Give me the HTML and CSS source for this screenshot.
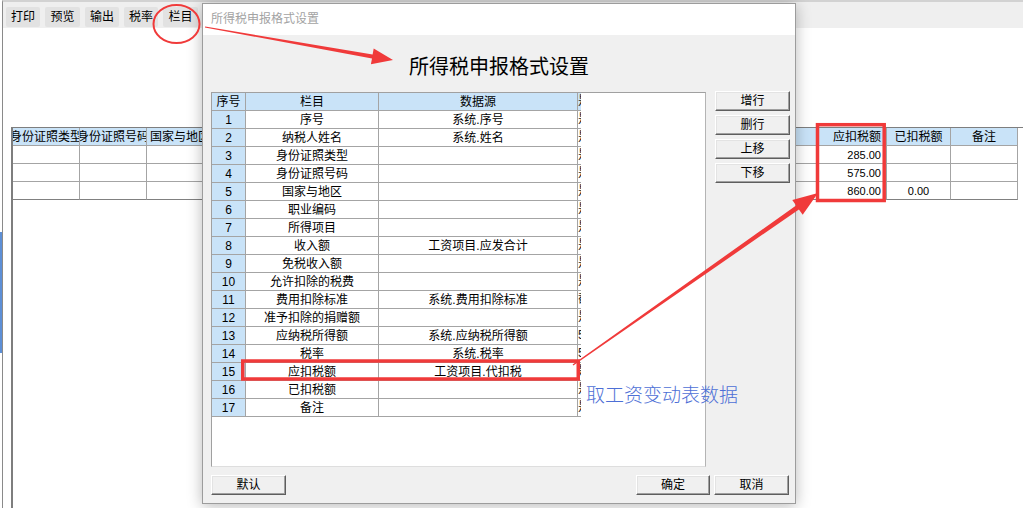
FILE: index.html
```html
<!DOCTYPE html>
<html lang="zh-CN">
<head>
<meta charset="utf-8">
<title>所得税申报格式设置</title>
<link rel="stylesheet" href="styles.css">
</head>
<body>
<div class="screen">
  <div class="edge"><div class="edge-blue"></div></div>
  <div class="app">
    <div class="toolbar">
      <span class="tbtn">打印</span>
      <span class="tbtn">预览</span>
      <span class="tbtn">输出</span>
      <span class="tbtn">税率</span>
      <span class="tbtn">栏目</span>
    </div>
    <div class="bg-grid">
      <div class="bh">身份证照类型</div>
      <div class="bh">身份证照号码</div>
      <div class="bh">国家与地区</div>
      <div class="bh">职业编码</div>
      <div class="bh">所得项目</div>
      <div class="bh">收入额</div>
      <div class="bh">免税收入额</div>
      <div class="bh">允许扣除的税费</div>
      <div class="bh">费用扣除标准</div>
      <div class="bh">准予扣除的捐赠额</div>
      <div class="bh">应纳税所得额</div>
      <div class="bh">税率</div>
      <div class="bh right">应扣税额</div>
      <div class="bh">已扣税额</div>
      <div class="bh">备注</div>

      <div class="bc"></div><div class="bc"></div><div class="bc"></div><div class="bc"></div><div class="bc"></div><div class="bc"></div><div class="bc"></div><div class="bc"></div><div class="bc"></div><div class="bc"></div><div class="bc"></div><div class="bc"></div>
      <div class="bc right num">285.00</div><div class="bc"></div><div class="bc"></div>

      <div class="bc"></div><div class="bc"></div><div class="bc"></div><div class="bc"></div><div class="bc"></div><div class="bc"></div><div class="bc"></div><div class="bc"></div><div class="bc"></div><div class="bc"></div><div class="bc"></div><div class="bc"></div>
      <div class="bc right num">575.00</div><div class="bc"></div><div class="bc"></div>

      <div class="bc last"></div><div class="bc last"></div><div class="bc last"></div><div class="bc last"></div><div class="bc last"></div><div class="bc last"></div><div class="bc last"></div><div class="bc last"></div><div class="bc last"></div><div class="bc last"></div><div class="bc last"></div><div class="bc last"></div>
      <div class="bc last right num">860.00</div><div class="bc last num">0.00</div><div class="bc last"></div>
    </div>
  </div>
</div>

<div class="dialog">
  <div class="titlebar">所得税申报格式设置</div>
  <div class="dbody">
    <div class="heading">所得税申报格式设置</div>
    <div class="main">
      <div class="listbox">
        <div class="grid">
          <div class="gh">序号</div><div class="gh">栏目</div><div class="gh">数据源</div><div class="gx gxh">是</div>

          <div class="gn">1</div><div class="gc">序号</div><div class="gc">系统.序号</div><div class="gx">是</div>
          <div class="gn">2</div><div class="gc">纳税人姓名</div><div class="gc">系统.姓名</div><div class="gx">是</div>
          <div class="gn">3</div><div class="gc">身份证照类型</div><div class="gc"></div><div class="gx">是</div>
          <div class="gn">4</div><div class="gc">身份证照号码</div><div class="gc"></div><div class="gx">是</div>
          <div class="gn">5</div><div class="gc">国家与地区</div><div class="gc"></div><div class="gx">是</div>
          <div class="gn">6</div><div class="gc">职业编码</div><div class="gc"></div><div class="gx">是</div>
          <div class="gn">7</div><div class="gc">所得项目</div><div class="gc"></div><div class="gx">是</div>
          <div class="gn">8</div><div class="gc">收入额</div><div class="gc">工资项目.应发合计</div><div class="gx">是</div>
          <div class="gn">9</div><div class="gc">免税收入额</div><div class="gc"></div><div class="gx">是</div>
          <div class="gn">10</div><div class="gc">允许扣除的税费</div><div class="gc"></div><div class="gx">是</div>
          <div class="gn">11</div><div class="gc">费用扣除标准</div><div class="gc">系统.费用扣除标准</div><div class="gx">截</div>
          <div class="gn">12</div><div class="gc">准予扣除的捐赠额</div><div class="gc"></div><div class="gx">是</div>
          <div class="gn">13</div><div class="gc">应纳税所得额</div><div class="gc">系统.应纳税所得额</div><div class="gx">5</div>
          <div class="gn">14</div><div class="gc">税率</div><div class="gc">系统.税率</div><div class="gx">5</div>
          <div class="gn">15</div><div class="gc">应扣税额</div><div class="gc">工资项目.代扣税</div><div class="gx">是</div>
          <div class="gn">16</div><div class="gc">已扣税额</div><div class="gc"></div><div class="gx">是</div>
          <div class="gn">17</div><div class="gc">备注</div><div class="gc"></div><div class="gx">是</div>
        </div>
      </div>
      <div class="sidebtns">
        <button class="btn">增行</button>
        <button class="btn">删行</button>
        <button class="btn">上移</button>
        <button class="btn">下移</button>
      </div>
    </div>
    <div class="footer">
      <button class="btn">默认</button>
      <button class="btn ok">确定</button>
      <button class="btn">取消</button>
    </div>
  </div>
</div>

<svg class="marks" width="1023" height="508" viewBox="0 0 1023 508">
  <ellipse cx="176.5" cy="24" rx="23" ry="19" fill="none" stroke="#f03a3a" stroke-width="2"/>
  <polygon points="205.1,26.5 372.6,54.4 373.7,48.5 393,60 370.9,64.3 372.0,58.4 204.9,27.5" fill="#f03a3a"/>
  <rect x="242.75" y="361" width="335.5" height="18" fill="none" stroke="#f03a3a" stroke-width="3.5"/>
  <rect x="817.5" y="124.7" width="66.7" height="75.8" fill="none" stroke="#f03a3a" stroke-width="3.5"/>
  <polygon points="572.6,364.4 796.1,205.4 792.3,200.0 818,193 802.7,214.8 798.9,209.4 573.4,365.6" fill="#f03a3a"/>
</svg>
<div class="note">取工资变动表数据</div>
</body>
</html>
```

FILE: styles.css
```css
* { box-sizing: border-box; }
html, body {
  margin: 0;
  padding: 0;
  width: 1023px;
  height: 508px;
  overflow: hidden;
  background: #ffffff;
  font-family: "Liberation Sans", "Noto Sans CJK SC", sans-serif;
  font-size: 12px;
  color: #000;
}
.screen {
  display: flex;
  width: 1023px;
  height: 508px;
}
.edge {
  width: 2px;
  flex: none;
  background: #ffffff;
}
.edge-blue {
  margin-top: 232px;
  height: 121px;
  background: #5d8fd6;
}
.app {
  flex: 1;
  border-left: 1px solid #8a8a8a;
  border-top: 2px solid #d2d2d2;
  background: #fff;
  display: flex;
  flex-direction: column;
}
.toolbar {
  height: 26px;
  background: #efefef;
  display: flex;
  gap: 5px;
  padding: 5px 0 0 3px;
}
.tbtn {
  width: 34px;
  height: 20px;
  line-height: 20px;
  text-align: center;
  background: #e2e2e2;
  border-radius: 2px;
  font-size: 12px;
}
.tbtn:nth-child(2), .tbtn:nth-child(5) { width: 35px; }

.bg-grid {
  margin: 99px 0 0 8px;
  flex: 1;
  border-left: 2px solid #7e7e7e;
  border-top: 1px solid #7e7e7e;
  display: grid;
  grid-template-columns: repeat(12, 67px) 70px 64px 67px;
  grid-template-rows: 18px 18px 18px 18px;
  align-content: start;
}
.bh, .bc {
  border-right: 1px solid #a4a4a4;
  border-bottom: 1px solid #a4a4a4;
  display: flex;
  align-items: center;
  justify-content: center;
  overflow: hidden;
  white-space: nowrap;
  line-height: 16px;
}
.bh { background: #c9e3f8; }
.bc.last { border-bottom-color: #808080; }
.bh.right, .bc.right { justify-content: flex-end; padding-right: 5px; }
.num { font-size: 11px; }

/* dialog window */
.dialog {
  position: absolute;
  left: 202px;
  top: 3px;
  width: 594px;
  height: 501px;
  border: 1px solid #9c9c9c;
  background: #f0f0f0;
  box-shadow: 0 2px 14px rgba(0, 0, 0, 0.28);
  display: flex;
  flex-direction: column;
}
.titlebar {
  height: 31px;
  line-height: 30px;
  padding-left: 8px;
  background: #ffffff;
  color: #a3a3a3;
  font-size: 12px;
}
.dbody {
  flex: 1;
  padding: 0 5px 0 8px;
  display: flex;
  flex-direction: column;
}
.heading {
  height: 56px;
  padding-top: 4px;
  display: flex;
  align-items: center;
  justify-content: center;
  font-size: 20px;
  margin-left: -3px;
}
.main {
  display: flex;
  gap: 9px;
}
.listbox {
  width: 495px;
  height: 375px;
  margin-top: 1px;
  background: #fff;
  border: 1px solid #a0a0a0;
  border-bottom-color: #dedede;
  border-right-color: #b4b4b4;
}
.grid {
  display: grid;
  grid-template-columns: 34px 133px 199px 3px;
  grid-auto-rows: 18px;
  width: 369px;
}
.gh, .gn, .gc {
  border-right: 1px solid #a4a4a4;
  border-bottom: 1px solid #a4a4a4;
  display: flex;
  align-items: center;
  justify-content: center;
  white-space: nowrap;
  overflow: hidden;
  line-height: 16px;
}
.gh, .gn { background: #c9e3f8; }
.gx {
  border-bottom: 1px solid #a4a4a4;
  overflow: hidden;
  white-space: nowrap;
  line-height: 16px;
  font-size: 12px;
  color: #222;
}
.gxh { background: #c9e3f8; }

.sidebtns {
  width: 75px;
  display: flex;
  flex-direction: column;
  gap: 4px;
}
.btn {
  width: 75px;
  height: 20px;
  padding: 0;
  margin: 0;
  background: #f0f0f0;
  border: 1px solid;
  border-color: #ffffff #5e5e5e #5e5e5e #ffffff;
  box-shadow: inset -1px -1px 0 #a0a0a0, inset 1px 1px 0 #e3e3e3;
  font-family: "Liberation Sans", "Noto Sans CJK SC", sans-serif;
  font-size: 12px;
  line-height: 16px;
  color: #000;
}
.footer {
  margin-top: 8px;
  display: flex;
  gap: 4px;
  padding-right: 1px;
}
.footer .btn:nth-child(2) { width: 74px; }
.footer .ok { margin-left: auto; }

/* screenshot annotations */
.marks {
  position: absolute;
  left: 0;
  top: 0;
  pointer-events: none;
}
.note {
  position: absolute;
  left: 586px;
  top: 384px;
  font-family: "Noto Sans CJK SC", sans-serif;
  font-size: 19px;
  line-height: 19px;
  font-weight: 300;
  color: #4d6fd6;
  white-space: nowrap;
}
```
